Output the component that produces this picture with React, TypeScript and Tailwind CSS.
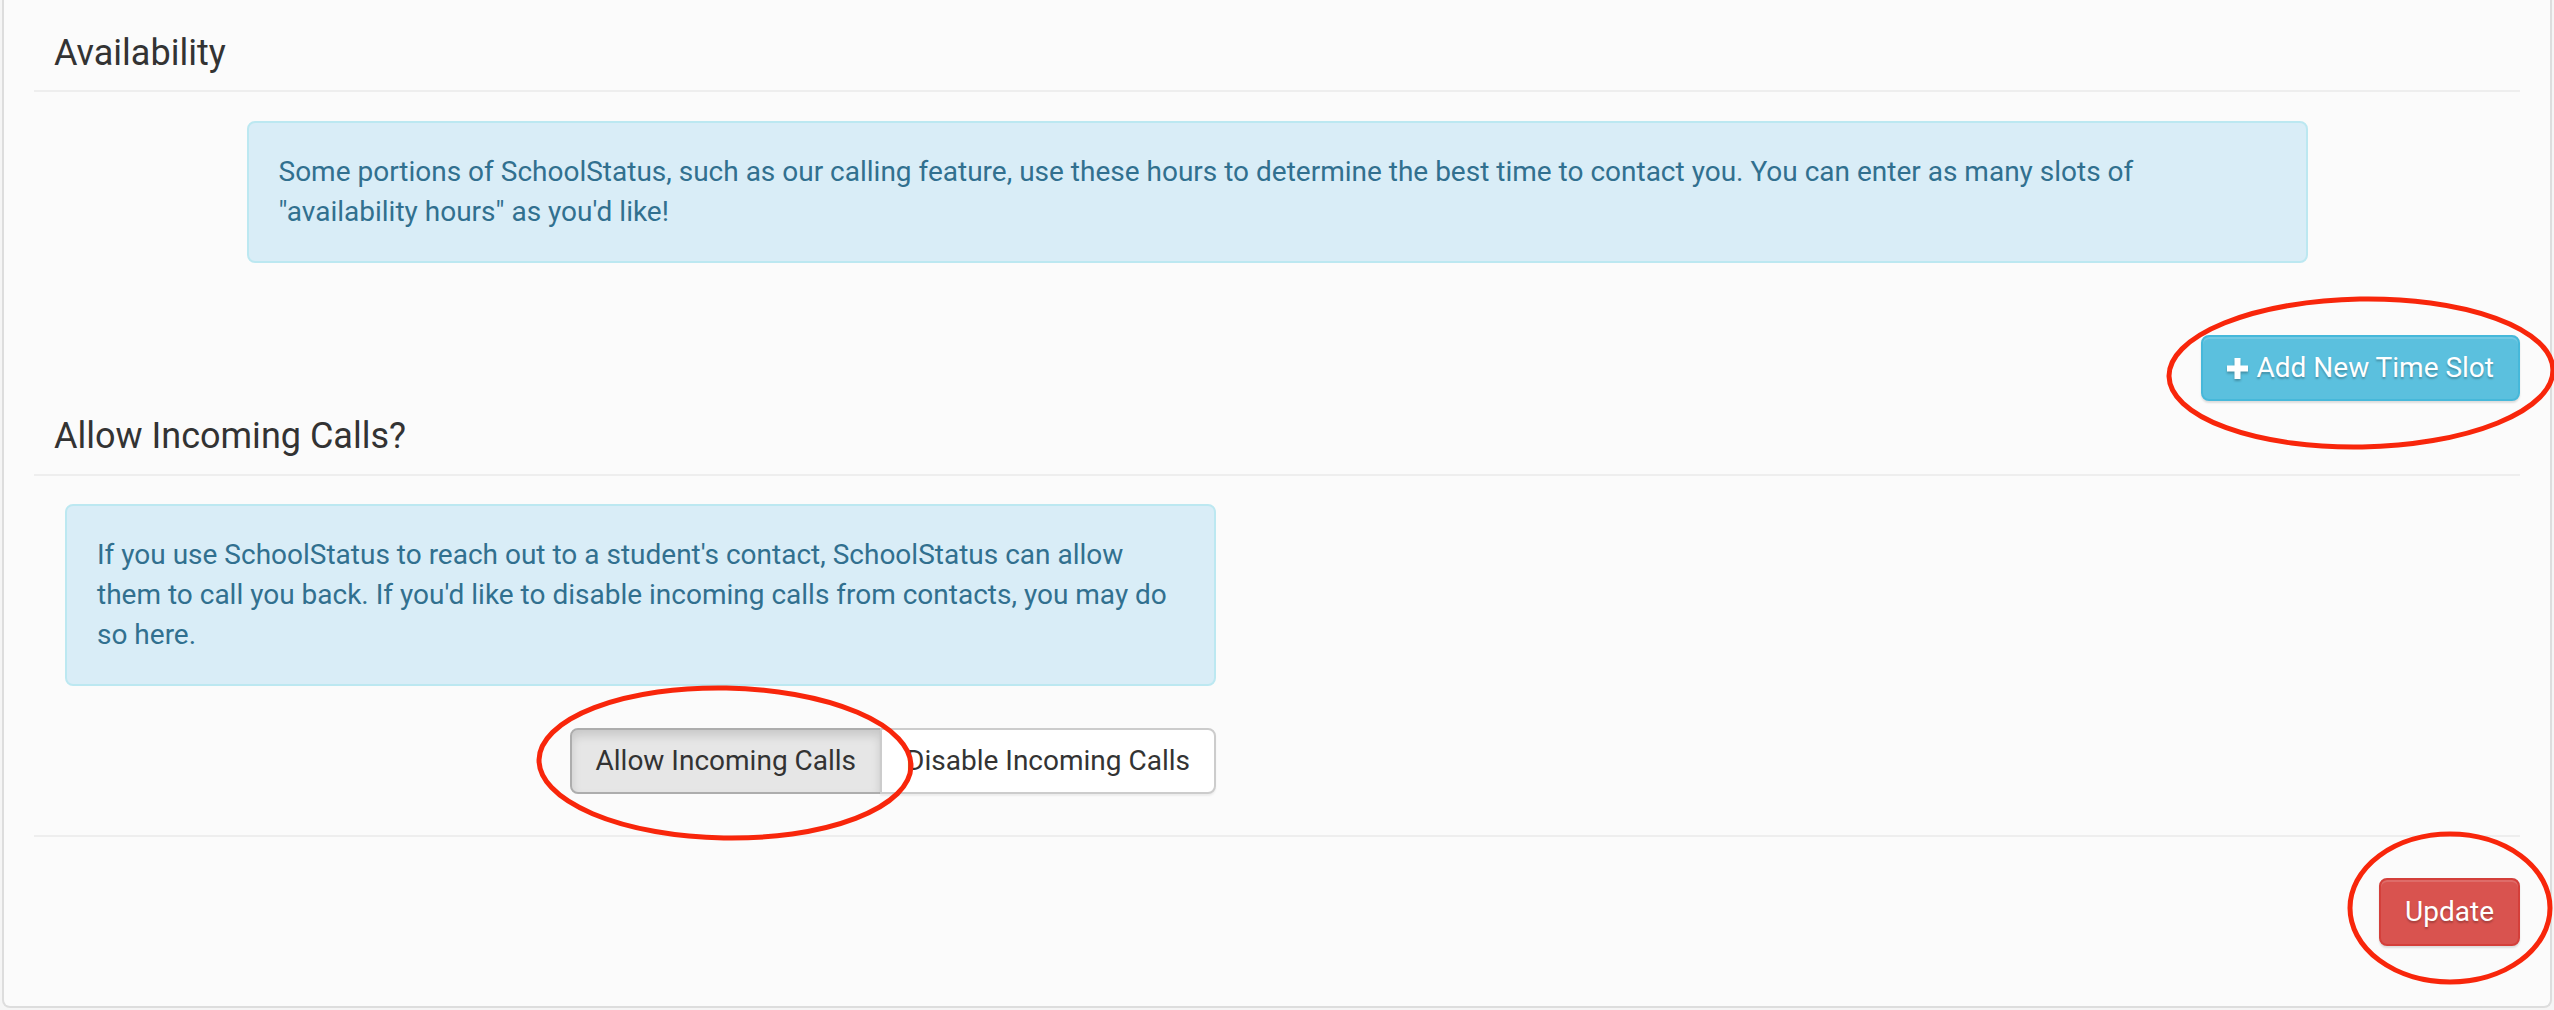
import React from 'react';

const PlusIcon: React.FC = () => (
  <svg className="w-[21px] h-[21px] shrink-0" viewBox="0 0 21 21" fill="currentColor">
    <path d="M7.5 0h6v7.5H21v6h-7.5V21h-6v-7.5H0v-6h7.5z" />
  </svg>
);

interface SectionTitleProps {
  children: React.ReactNode;
  className?: string;
}

const SectionTitle: React.FC<SectionTitleProps> = ({ children, className = '' }) => (
  <h4
    className={`pl-[20px] text-[36px] leading-[40px] font-normal text-[#333333] border-b-2 border-[#eeeeee] ${className}`}
  >
    {children}
  </h4>
);

const InfoAlert: React.FC<{ children: React.ReactNode; className?: string }> = ({
  children,
  className = '',
}) => (
  <div
    className={`border-2 border-[#bce8f1] bg-[#d9edf7] rounded-[8px] px-[30px] py-[29px] text-[28px] leading-[40px] text-[#31708f] ${className}`}
  >
    {children}
  </div>
);

// red hand-drawn marks laid over the screenshot
const Annotations: React.FC = () => (
  <svg
    className="absolute left-0 top-0 w-[2554px] h-[1010px] pointer-events-none"
    viewBox="0 0 2554 1010"
    fill="none"
    stroke="#f8260b"
    strokeWidth={5}
  >
    <ellipse cx="2361" cy="373" rx="192" ry="74" transform="rotate(-1 2361 373)" />
    <ellipse cx="725" cy="763" rx="186" ry="75" transform="rotate(1 725 763)" />
    <ellipse cx="2450" cy="908" rx="100" ry="74" />
  </svg>
);

export default function App() {
  return (
    <div className="relative min-h-screen overflow-hidden bg-[#f5f5f5] font-['Roboto','Liberation_Sans',sans-serif]">
      <div className="mx-[2px] border-x-2 border-b-2 border-[#dddddd] rounded-b-[8px] bg-[#fbfbfb] px-[30px] pb-[60px]">
        {/* Availability */}
        <SectionTitle className="pt-[33px] pb-[17px]">Availability</SectionTitle>

        <InfoAlert className="mt-[29px] mx-auto w-[2061px]">
          Some portions of SchoolStatus, such as our calling feature, use these hours to
          determine the best time to contact you. You can enter as many slots of
          "availability hours" as you'd like!
        </InfoAlert>

        <div className="flex justify-end mt-[72px]">
          <button
            type="button"
            className="flex items-center gap-[9px] px-[24px] py-[11px] text-[28px] leading-[40px] text-white bg-[#5bc0de] border-2 border-[#46b8da] rounded-[8px] [text-shadow:0_2px_2px_rgba(0,0,0,0.25)] shadow-[inset_0_2px_0_rgba(255,255,255,0.15),0_2px_2px_rgba(0,0,0,0.12)]"
          >
            <span className="drop-shadow-[0_2px_1px_rgba(0,0,0,0.25)]">
              <PlusIcon />
            </span>
            Add New Time Slot
          </button>
        </div>

        {/* Incoming calls */}
        <SectionTitle className="mt-[15px] pb-[18px]">Allow Incoming Calls?</SectionTitle>

        <div className="ml-[31px] w-[1151px]">
          <InfoAlert className="mt-[28px]">
            If you use SchoolStatus to reach out to a student's contact, SchoolStatus can allow
            them to call you back. If you'd like to disable incoming calls from contacts, you may
            do so here.
          </InfoAlert>

          <div className="flex justify-end mt-[42px]">
            <div className="flex">
              <button
                type="button"
                className="px-[24px] py-[11px] text-[28px] leading-[40px] text-[#333333] bg-[#e6e6e6] border-2 border-[#adadad] rounded-l-[8px] shadow-[inset_0_6px_10px_rgba(0,0,0,0.125)]"
              >
                Allow Incoming Calls
              </button>
              <button
                type="button"
                className="-ml-[2px] px-[24px] py-[11px] text-[28px] leading-[40px] text-[#333333] bg-white border-2 border-[#cccccc] rounded-r-[8px] shadow-[0_2px_2px_rgba(0,0,0,0.06)]"
              >
                Disable Incoming Calls
              </button>
            </div>
          </div>
        </div>

        <div className="mt-[41px] h-[2px] bg-[#eeeeee]" />

        <div className="flex justify-end mt-[41px]">
          <button
            type="button"
            className="px-[24px] py-[12px] text-[28px] leading-[40px] text-white bg-[#d9534f] border-2 border-[#d43f3a] rounded-[8px] [text-shadow:0_2px_2px_rgba(0,0,0,0.25)] shadow-[inset_0_2px_0_rgba(255,255,255,0.15),0_2px_2px_rgba(0,0,0,0.12)]"
          >
            Update
          </button>
        </div>
      </div>

      <Annotations />
    </div>
  );
}
